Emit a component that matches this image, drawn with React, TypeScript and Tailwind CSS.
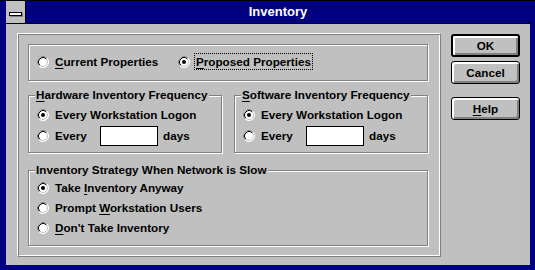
import type { ReactNode } from 'react';

// Windows 3.x style "Inventory" dialog

function Radio({ checked }: { checked?: boolean }) {
  return (
    <svg width="12" height="12" viewBox="0 0 12 12" className="shrink-0">
      <circle cx="6" cy="6" r="5.5" fill="#fff" stroke="#fff" />
      <path d="M2.11 9.89 A5.5 5.5 0 0 1 9.89 2.11" fill="none" stroke="#808080" />
      <circle cx="6" cy="6" r="4.5" fill="#fff" stroke="#c0c0c0" />
      <path d="M2.82 9.18 A4.5 4.5 0 0 1 9.18 2.82" fill="none" stroke="#000" />
      {checked && <circle cx="6" cy="6" r="2" fill="#000" />}
    </svg>
  );
}

function GroupBox({
  title,
  className,
  children,
}: {
  title?: ReactNode;
  className?: string;
  children: ReactNode;
}) {
  return (
    <div
      className={`relative border border-[#808080] shadow-[1px_1px_0_#fff,inset_1px_1px_0_#fff] ${className ?? ''}`}
    >
      {title && (
        <span className="absolute -top-[8px] left-[6px] bg-[#c0c0c0] px-[1px] leading-[14px] whitespace-nowrap">
          {title}
        </span>
      )}
      {children}
    </div>
  );
}

function Option({ checked, children }: { checked?: boolean; children: ReactNode }) {
  return (
    <div className="flex items-center h-[14px]">
      <Radio checked={checked} />
      <span className="ml-[6px] leading-[14px] whitespace-nowrap">{children}</span>
    </div>
  );
}

function EveryRow() {
  return (
    <div className="flex items-center h-[20px] mt-[4px]">
      <Radio />
      <span className="ml-[6px] w-[45px] leading-[14px]">Every</span>
      <div className="w-[58px] h-[20px] bg-white border border-black" />
      <span className="ml-[5px] leading-[14px]">days</span>
    </div>
  );
}

function Button({ children, primary }: { children: ReactNode; primary?: boolean }) {
  return (
    <button
      className={`w-[69px] h-[23px] flex items-center justify-center rounded-[3px] bg-[#c0c0c0] border-black shadow-[inset_2px_2px_0_#fff,inset_-2px_-2px_0_#808080] leading-[14px] ${
        primary ? 'border-2' : 'border'
      }`}
    >
      {children}
    </button>
  );
}

const U = ({ children }: { children: ReactNode }) => (
  <span className="underline underline-offset-[2px]">{children}</span>
);

export default function App() {
  return (
    <div className="w-[535px] h-[270px] bg-[#000080] border-t border-black pl-[6px] pr-[5px] pb-[5px] flex flex-col font-['Liberation_Sans',Arial,sans-serif] font-bold text-[11.7px] text-black">
      {/* Title bar */}
      <div className="h-[23px] flex border-b border-black shrink-0">
        <div className="w-[20px] h-[22px] bg-[#c0c0c0] border-r border-black flex items-center justify-center pt-[3px] pr-[1px]">
          <div className="w-[13px] h-[4px] bg-white border border-black shadow-[1px_1px_0_#808080]" />
        </div>
        <div className="flex-1 flex items-center justify-center text-white text-[13px] leading-[16px]">
          Inventory
        </div>
      </div>

      {/* Client area */}
      <div className="flex-1 bg-[#c0c0c0] flex items-start">
        <div className="ml-[11px] mt-[9px] w-[424px] h-[224px] border border-t-white border-l-white border-r-[#808080] border-b-[#808080] shadow-[inset_1px_1px_0_#808080,inset_-1px_-1px_0_#fff] pl-[10px] pt-[10px]">
          <GroupBox className="w-[400px] h-[37px] pl-[8px] pt-[8px]">
            <div className="flex items-center h-[17px]">
              <div className="flex items-center w-[141px]">
                <Radio />
                <span className="ml-[6px] leading-[15px] whitespace-nowrap">
                  <U>C</U>urrent Properties
                </span>
              </div>
              <Radio checked />
              <span className="ml-[4px] border border-dotted border-black px-[1px] leading-[15px] whitespace-nowrap">
                <U>P</U>roposed Properties
              </span>
            </div>
          </GroupBox>

          <div className="flex gap-[12px] mt-[14px]">
            <GroupBox
              className="w-[194px] h-[58px] pl-[8px] pt-[12px]"
              title={
                <>
                  <U>H</U>ardware Inventory Frequency
                </>
              }
            >
              <Option checked>Every Workstation Logon</Option>
              <EveryRow />
            </GroupBox>
            <GroupBox
              className="w-[194px] h-[58px] pl-[8px] pt-[12px]"
              title={
                <>
                  <U>S</U>oftware Inventory Frequency
                </>
              }
            >
              <Option checked>Every Workstation Logon</Option>
              <EveryRow />
            </GroupBox>
          </div>

          <GroupBox
            className="w-[400px] h-[76px] mt-[17px] pl-[8px] pt-[10px] flex flex-col gap-[6px]"
            title="Inventory Strategy When Network is Slow"
          >
            <Option checked>
              Take <U>I</U>nventory Anyway
            </Option>
            <Option>
              Prompt <U>W</U>orkstation Users
            </Option>
            <Option>
              <U>D</U>on't Take Inventory
            </Option>
          </GroupBox>
        </div>

        <div className="ml-[10px] mt-[10px] flex flex-col">
          <Button primary>OK</Button>
          <div className="mt-[4px]">
            <Button>Cancel</Button>
          </div>
          <div className="mt-[13px]">
            <Button>
              <U>H</U>elp
            </Button>
          </div>
        </div>
      </div>
    </div>
  );
}
